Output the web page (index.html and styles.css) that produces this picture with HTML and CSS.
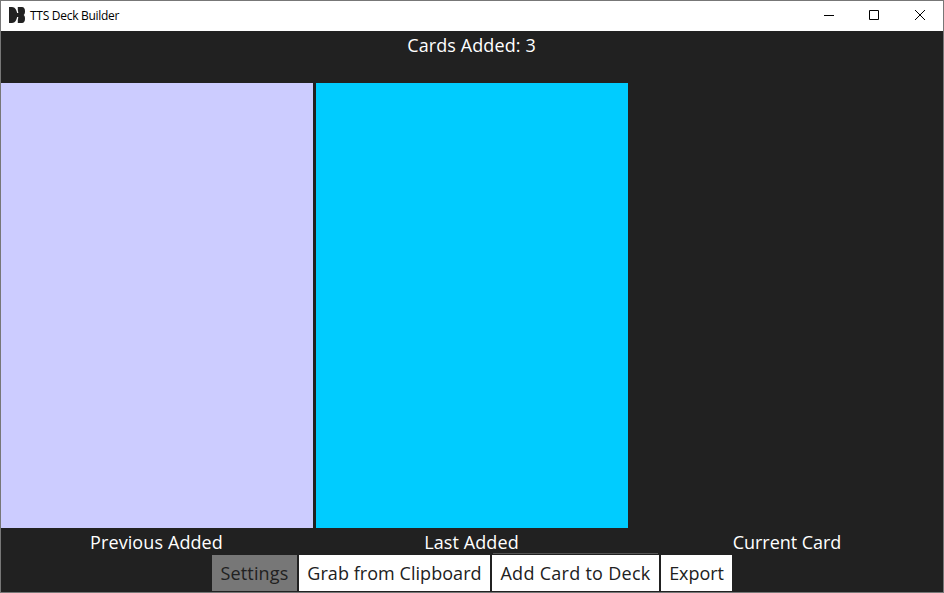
FILE: index.html
```html
<!DOCTYPE html>
<html lang="en">
<head>
<meta charset="utf-8">
<title>TTS Deck Builder</title>
<link rel="stylesheet" href="styles.css">
</head>
<body>
<div class="window">
  <header class="titlebar">
    <svg class="logo" width="17" height="16" viewBox="0 0 17 16"><path d="M0 0H3C6 0 8.200 3.500 8.200 8C8.200 12.500 6 16 3 16H0Z"/><path d="M8.800 0H13C15 0 16 1.800 16 4.300C16 6.300 15.500 7.400 14.600 8C15.500 8.600 16 9.700 16 11.700C16 14.200 15 16 13 16H8.800L8.800 13C9.600 10 9.600 6 8.800 3Z"/><path d="M7.500 6H10V10H7.500Z"/></svg>
    <h1 class="title">TTS Deck Builder</h1>
    <div class="controls">
      <svg width="46" height="30" viewBox="0 0 46 30"><path d="M18 14.500H28"/></svg>
      <svg width="46" height="30" viewBox="0 0 46 30"><path d="M17.500 9.500H26.500V18.500H17.500Z"/></svg>
      <svg width="46" height="30" viewBox="0 0 46 30"><path d="M17 9L27 19M27 9L17 19"/></svg>
    </div>
  </header>
  <div class="count">Cards Added: 3</div>
  <main class="cards">
    <section class="slot"><div class="card previous"></div><div class="label">Previous Added</div></section>
    <section class="slot"><div class="card last"></div><div class="label">Last Added</div></section>
    <section class="slot"><div class="card"></div><div class="label current">Current Card</div></section>
  </main>
  <footer class="actions">
    <button class="btn settings" disabled>Settings</button>
    <button class="btn grab">Grab from Clipboard</button>
    <button class="btn add">Add Card to Deck</button>
    <button class="btn export">Export</button>
  </footer>
</div>
</body>
</html>
```
FILE: styles.css
```css
* { box-sizing: border-box; }
body { margin: 0; font-family: "Open Sans", "Noto Sans", sans-serif; }
.window {
  width: 944px;
  height: 593px;
  border: 1px solid #777;
  background: #212121;
  color: #fff;
  display: flex;
  flex-direction: column;
  overflow: hidden;
  font-size: 18px;
  font-weight: 400;
}
.titlebar {
  height: 30px;
  flex: none;
  display: flex;
  align-items: center;
  background: #fff;
  color: #000;
  padding-left: 8px;
}
.logo { fill: #212121; margin-top: -2px; }
.title {
  margin: 0 0 0 4px;
  font-size: 12px;
  font-weight: 400;
  letter-spacing: -0.28px;
  line-height: 30px;
  white-space: nowrap;
}
.controls { display: flex; margin-left: auto; margin-right: -1px; }
.controls svg { fill: none; stroke: #000; stroke-width: 1; }
.count { height: 52px; line-height: 28px; text-align: center; flex: none; padding-right: 1px; letter-spacing: 0.1px; }
.cards {
  display: grid;
  grid-template-columns: repeat(3, 312px);
  gap: 3px;
  flex: none;
}
.card { height: 445px; }
.previous { background: #ccf; }
.last { background: #0cf; }
.label { height: 27px; line-height: 28px; text-align: center; white-space: nowrap; letter-spacing: 0.1px; padding-right: 1px; }
.current { letter-spacing: -0.05px; padding-right: 0; }
.actions { display: flex; justify-content: center; gap: 2px; height: 36px; }
.btn {
  height: 36px;
  padding: 0;
  border: 0;
  background: #fff;
  color: #212121;
  font: inherit;
  line-height: 36px;
  white-space: nowrap;
  position: relative;
}
.settings { width: 85px; background: #777; letter-spacing: 0.15px; }
.grab { width: 191px; letter-spacing: 0.05px; }
.add { width: 167px; letter-spacing: 0.28px; }
.add::before {
  content: "";
  position: absolute;
  left: 1px;
  right: 1px;
  top: -2px;
  height: 1px;
  background: #555;
}
.export { width: 71px; letter-spacing: -0.05px; }
```
